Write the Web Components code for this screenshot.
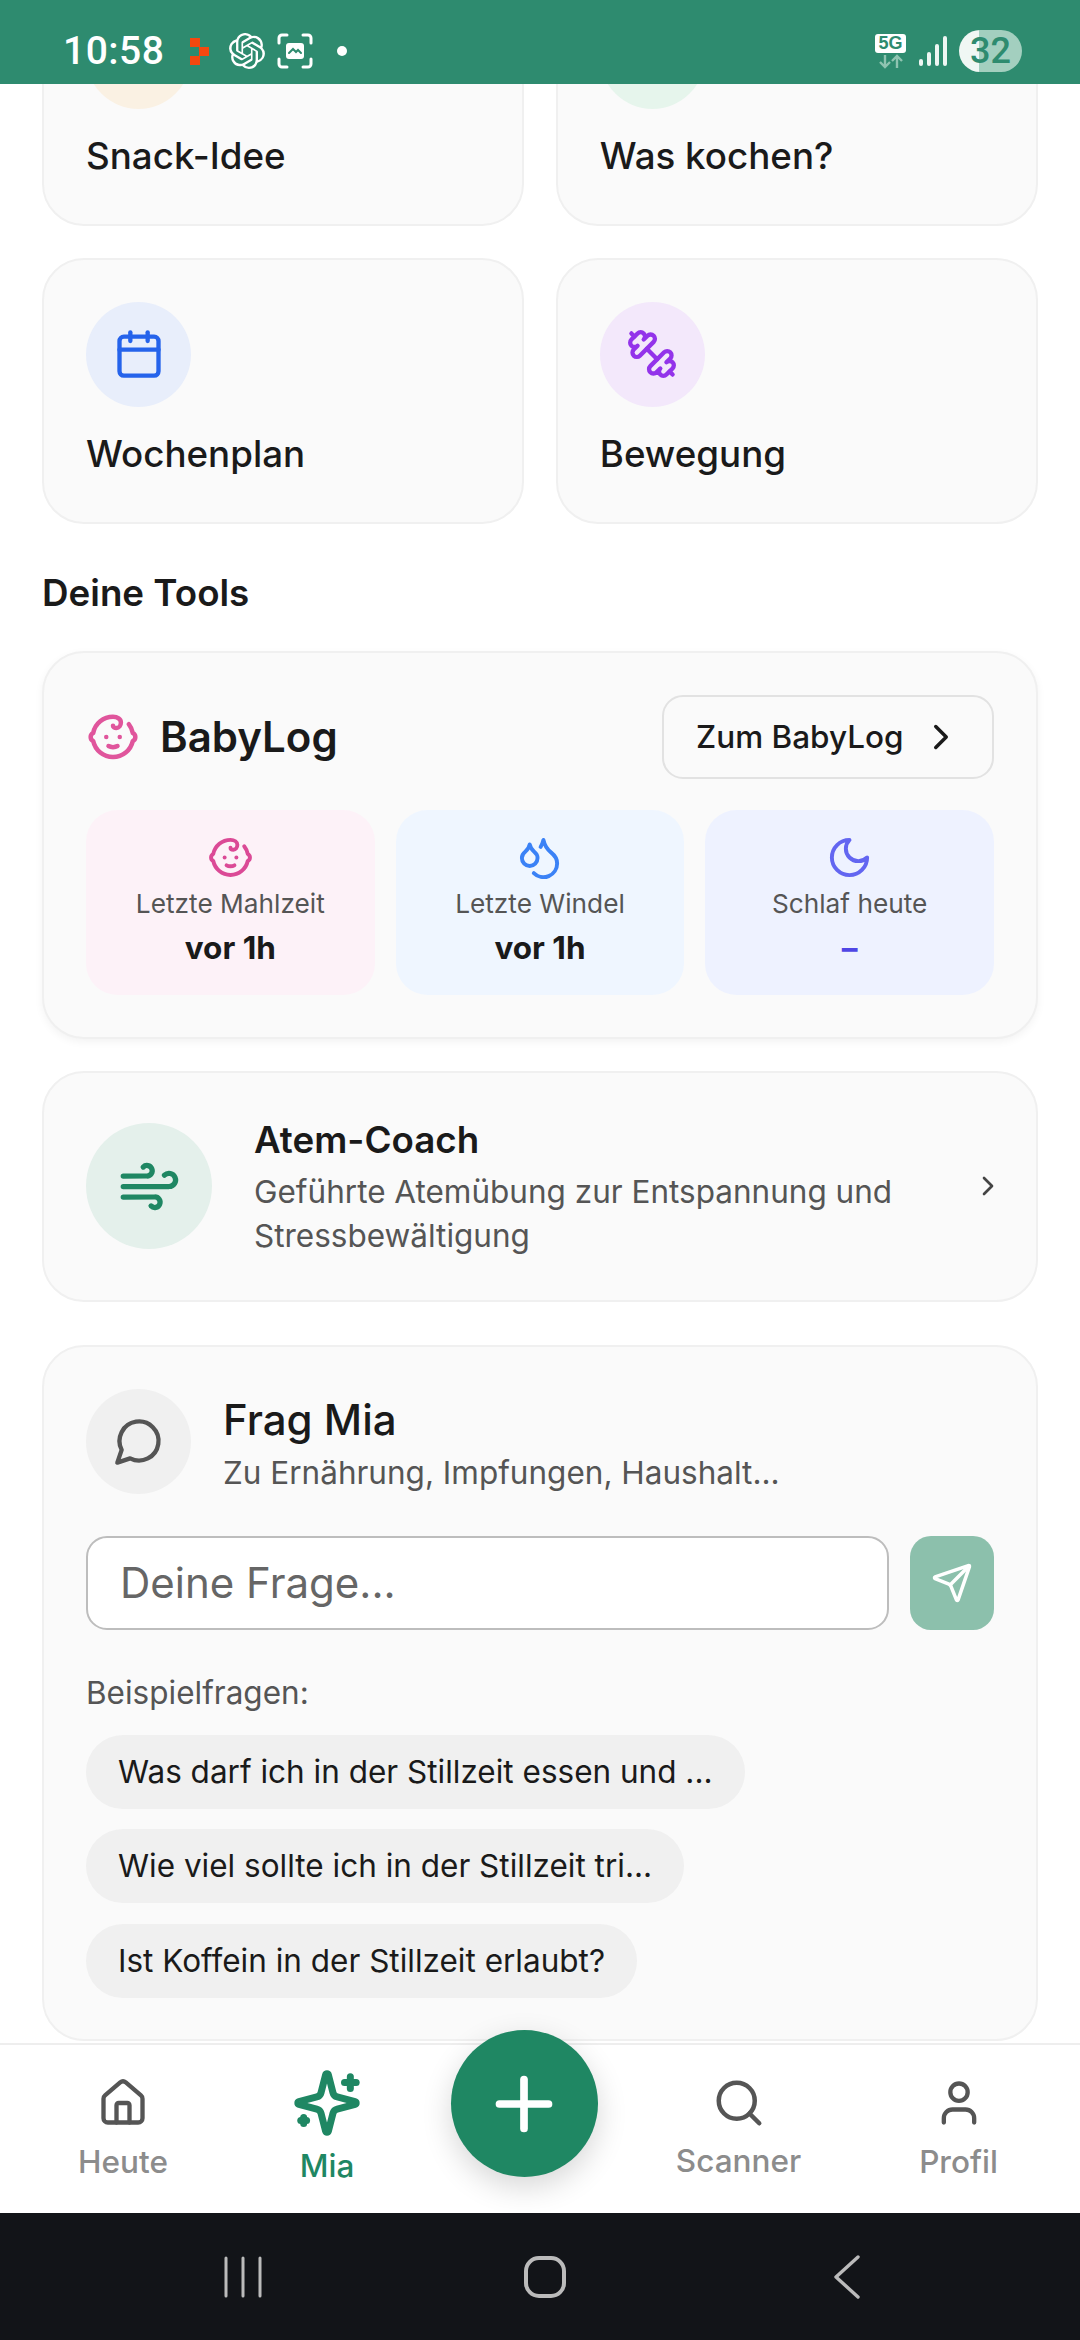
<!DOCTYPE html>
<html lang="de">
<head>
<meta charset="utf-8">
<title>Mia</title>
<style>
  html, body { margin: 0; padding: 0; background: #fff; width: 1080px; height: 2340px; overflow: hidden; }
  body { font-family: Inter, "Liberation Sans", sans-serif; color: #1a1a1a; }
  app-shell { display: flex; }
</style>
</head>
<body>
<app-shell>
  <status-bar slot="top"></status-bar>

  <action-card icon="calendar" tint="#faf1e3" tone="#ea8c1a">Snack-Idee</action-card>
  <action-card icon="calendar" tint="#e6f5ec" tone="#1f8763">Was kochen?</action-card>
  <action-card icon="calendar" tint="#e8eefb" tone="#2563eb">Wochenplan</action-card>
  <action-card icon="dumbbell" tint="#f3e8fb" tone="#9333ea">Bewegung</action-card>

  <section-title slot="after">Deine Tools</section-title>
  <baby-log slot="after">
    <stat-tile icon="baby" bg="#fdf2f8" tone="#db4a96" label="Letzte Mahlzeit" value="vor 1h"></stat-tile>
    <stat-tile icon="droplets" bg="#eff6ff" tone="#3b82f6" label="Letzte Windel" value="vor 1h"></stat-tile>
    <stat-tile icon="moon" bg="#eef2ff" tone="#6366f1" label="Schlaf heute" value="–" value-color="#4f46e5"></stat-tile>
  </baby-log>
  <atem-coach slot="after"></atem-coach>
  <frag-mia slot="after">
    <ask-chip>Was darf ich in der Stillzeit essen und ...</ask-chip>
    <ask-chip>Wie viel sollte ich in der Stillzeit tri...</ask-chip>
    <ask-chip>Ist Koffein in der Stillzeit erlaubt?</ask-chip>
  </frag-mia>

  <bottom-nav slot="nav"></bottom-nav>
  <system-nav slot="nav"></system-nav>
</app-shell>

<script>
'use strict';

const ICONS = {
  calendar: '<path d="M8 2v4"/><path d="M16 2v4"/><rect width="18" height="18" x="3" y="4" rx="2"/><path d="M3 10h18"/>',
  dumbbell: '<path d="M14.4 14.4 9.6 9.6"/><path d="M18.657 21.485a2 2 0 1 1-2.829-2.828l-1.767 1.768a2 2 0 1 1-2.829-2.829l6.364-6.364a2 2 0 1 1 2.829 2.829l-1.768 1.767a2 2 0 1 1 2.828 2.829z"/><path d="m21.5 21.5-1.4-1.4"/><path d="M3.9 3.9 2.5 2.5"/><path d="M6.404 12.768a2 2 0 1 1-2.829-2.829l1.768-1.767a2 2 0 1 1-2.828-2.829l2.828-2.828a2 2 0 1 1 2.829 2.828l1.767-1.768a2 2 0 1 1 2.829 2.829z"/>',
  baby: '<path d="M9 12h.01"/><path d="M15 12h.01"/><path d="M10 16c.5.3 1.2.5 2 .5s1.5-.2 2-.5"/><path d="M19 6.3a9 9 0 0 1 1.8 3.9 2 2 0 0 1 0 3.6 9 9 0 0 1-17.6 0 2 2 0 0 1 0-3.6A9 9 0 0 1 12 3c2 0 3.5 1.1 3.5 2.5s-.9 2.5-2 2.5c-.8 0-1.5-.4-1.5-1"/>',
  droplets: '<path d="M7 16.3c2.2 0 4-1.83 4-4.05 0-1.16-.57-2.26-1.71-3.19S7.29 6.75 7 5.3c-.29 1.45-1.14 2.84-2.29 3.76S3 11.1 3 12.25c0 2.22 1.8 4.05 4 4.05z"/><path d="M12.56 6.6A10.97 10.97 0 0 0 14 3.02c.5 2.5 2 4.9 4 6.5s3 3.5 3 5.5a6.98 6.98 0 0 1-11.91 4.97"/>',
  moon: '<path d="M12 3a6 6 0 0 0 9 9 9 9 0 1 1-9-9Z"/>',
  wind: '<path d="M17.7 7.7a2.5 2.5 0 1 1 1.8 4.3H2"/><path d="M9.6 4.6A2 2 0 1 1 11 8H2"/><path d="M12.6 19.4A2 2 0 1 0 14 16H2"/>',
  message: '<path d="M7.9 20A9 9 0 1 0 4 16.1L2 22Z"/>',
  send: '<path d="M14.536 21.686a.5.5 0 0 0 .937-.024l6.5-19a.496.496 0 0 0-.635-.635l-19 6.5a.5.5 0 0 0-.024.937l7.93 3.18a2 2 0 0 1 1.112 1.11z"/><path d="m21.854 2.147-10.94 10.939"/>',
  house: '<path d="M15 21v-8a1 1 0 0 0-1-1h-4a1 1 0 0 0-1 1v8"/><path d="M3 10a2 2 0 0 1 .709-1.528l7-5.999a2 2 0 0 1 2.582 0l7 5.999A2 2 0 0 1 21 10v9a2 2 0 0 1-2 2H5a2 2 0 0 1-2-2z"/>',
  sparkles: '<path d="M9.937 15.5A2 2 0 0 0 8.5 14.063l-6.135-1.582a.5.5 0 0 1 0-.962L8.5 9.936A2 2 0 0 0 9.937 8.5l1.582-6.135a.5.5 0 0 1 .963 0L14.063 8.5A2 2 0 0 0 15.5 9.937l6.135 1.581a.5.5 0 0 1 0 .964L15.5 14.063a2 2 0 0 0-1.437 1.437l-1.582 6.135a.5.5 0 0 1-.963 0z"/><path d="M20 3v4"/><path d="M22 5h-4"/><path d="M4 17v2"/><path d="M5 18H3"/>',
  search: '<path d="m21 21-4.34-4.34"/><circle cx="11" cy="11" r="8"/>',
  user: '<path d="M19 21v-2a4 4 0 0 0-4-4H9a4 4 0 0 0-4 4v2"/><circle cx="12" cy="7" r="4"/>',
  chevron: '<path d="m9 18 6-6-6-6"/>',
  plus: '<path d="M5 12h14"/><path d="M12 5v14"/>'
};

class LineIcon extends HTMLElement {
  connectedCallback() {
    const size = this.getAttribute('size') || 52;
    const stroke = this.getAttribute('stroke') || 2;
    const tone = this.getAttribute('tone') || 'currentColor';
    this.attachShadow({ mode: 'open' }).innerHTML = `
<style>
  :host { display: block; width: ${size}px; height: ${size}px; flex: none; }
  svg { display: block; width: 100%; height: 100%; }
</style>
<svg viewBox="0 0 24 24" fill="none" stroke="${tone}" stroke-width="${stroke}" stroke-linecap="round" stroke-linejoin="round">${ICONS[this.getAttribute('name')]}</svg>`;
  }
}
customElements.define('line-icon', LineIcon);

class AppShell extends HTMLElement {
  constructor() {
    super();
    this.attachShadow({ mode: 'open' }).innerHTML = `
<style>
  :host { display: flex; flex-direction: column; width: 1080px; height: 2340px; overflow: hidden; }
  main { flex: 1; min-height: 0; overflow: hidden; }
  .scroll { margin-top: -124px; padding: 0 42px; display: flex; flex-direction: column; }
  .grid { display: grid; grid-template-columns: 1fr 1fr; gap: 31.5px; }
  .after { display: flex; flex-direction: column; }
  .nav { position: relative; z-index: 2; }
</style>
<slot name="top"></slot>
<main>
  <div class="scroll">
    <div class="grid"><slot></slot></div>
    <div class="after"><slot name="after"></slot></div>
  </div>
</main>
<div class="nav"><slot name="nav"></slot></div>`;
  }
}
customElements.define('app-shell', AppShell);

class StatusBar extends HTMLElement {
  constructor() {
    super();
    this.attachShadow({ mode: 'open' }).innerHTML = `
<style>
  :host { display: flex; align-items: center; justify-content: space-between; height: 84px; background: #2e8b6f; color: #fff; padding: 18px 58px 0 63px; box-sizing: border-box; position: relative; z-index: 2; font-family: Roboto, "Noto Sans", sans-serif; }
  .left, .right { display: flex; align-items: center; }
  .time { font-size: 39px; font-weight: 500; letter-spacing: .5px; margin-right: 26px; }
  .dot { width: 10px; height: 10px; border-radius: 50%; background: #fff; margin-left: 24px; }
  svg { display: block; flex: none; }
  .g5 { display: flex; flex-direction: column; align-items: center; gap: 1px; margin: 0 13px 0 0; }
  .g5 b { display: block; background: #fff; color: #2e8b6f; font-size: 18px; line-height: 19px; width: 31px; text-align: center; border-radius: 3px; font-family: "Liberation Sans", sans-serif; }
  .batt { width: 63px; height: 42px; margin-left: 12px; border-radius: 21px; overflow: hidden; background: linear-gradient(90deg, #f0f7f4 0 32%, #a3cfbf 32% 100%); color: #2e8b6f; font-size: 36px; font-weight: 500; line-height: 42px; text-align: center; }
</style>
<div class="left">
  <span class="time">10:58</span>
  <svg width="20" height="27" viewBox="0 0 20 27" fill="#f4480f"><rect x="0" y="0" width="10" height="9"/><rect x="9" y="9" width="10" height="9"/><rect x="0" y="18" width="10" height="9"/></svg>
  <svg style="margin-left:19px" width="36" height="36" viewBox="0 0 24 24" fill="#fff"><path d="M22.2819 9.8211a5.9847 5.9847 0 0 0-.5157-4.9108 6.0462 6.0462 0 0 0-6.5098-2.9A6.0651 6.0651 0 0 0 4.9807 4.1818a5.9847 5.9847 0 0 0-3.9977 2.9 6.0462 6.0462 0 0 0 .7427 7.0966 5.98 5.98 0 0 0 .511 4.9107 6.051 6.051 0 0 0 6.5146 2.9001A5.9847 5.9847 0 0 0 13.2599 24a6.0557 6.0557 0 0 0 5.7718-4.2058 5.9894 5.9894 0 0 0 3.9977-2.9001 6.0557 6.0557 0 0 0-.7475-7.0729zm-9.022 12.6081a4.4755 4.4755 0 0 1-2.8764-1.0408l.1419-.0804 4.7783-2.7582a.7948.7948 0 0 0 .3927-.6813v-6.7369l2.02 1.1686a.071.071 0 0 1 .038.052v5.5826a4.504 4.504 0 0 1-4.4945 4.4944zm-9.6607-4.1254a4.4708 4.4708 0 0 1-.5346-3.0137l.142.0852 4.783 2.7582a.7712.7712 0 0 0 .7806 0l5.8428-3.3685v2.3324a.0804.0804 0 0 1-.0332.0615L9.74 19.9502a4.4992 4.4992 0 0 1-6.1408-1.6464zM2.3408 7.8956a4.485 4.485 0 0 1 2.3655-1.9728V11.6a.7664.7664 0 0 0 .3879.6765l5.8144 3.3543-2.0201 1.1685a.0757.0757 0 0 1-.071 0l-4.8303-2.7865A4.504 4.504 0 0 1 2.3408 7.872zm16.5963 3.8558L13.1038 8.364 15.1192 7.2a.0757.0757 0 0 1 .071 0l4.8303 2.7913a4.4944 4.4944 0 0 1-.6765 8.1042v-5.6772a.79.79 0 0 0-.407-.667zm2.0107-3.0231l-.142-.0852-4.7735-2.7818a.7759.7759 0 0 0-.7854 0L9.409 9.2297V6.8974a.0662.0662 0 0 1 .0284-.0615l4.8303-2.7866a4.4992 4.4992 0 0 1 6.6802 4.66zM8.3065 12.863l-2.02-1.1638a.0804.0804 0 0 1-.038-.0567V6.0742a4.4992 4.4992 0 0 1 7.3757-3.4537l-.142.0805L8.704 5.459a.7948.7948 0 0 0-.3927.6813zm1.0976-2.3654l2.602-1.4998 2.6069 1.4998v2.9994l-2.5974 1.4997-2.6067-1.4997Z"/></svg>
  <svg style="margin-left:12px" width="36" height="36" viewBox="0 0 36 36" fill="none" stroke="#fff" stroke-width="3" stroke-linecap="round"><path d="M2 10V5a3 3 0 0 1 3-3h5M26 2h5a3 3 0 0 1 3 3v5M34 26v5a3 3 0 0 1-3 3h-5M10 34H5a3 3 0 0 1-3-3v-5"/><rect x="9" y="10" width="18" height="16" rx="3" fill="#fff" stroke="none"/><path d="M12 20l4-4 3 3 2-2 3 3" stroke="#2e8b6f" stroke-width="2"/></svg>
  <span class="dot"></span>
</div>
<div class="right">
  <div class="g5">
    <b>5G</b>
    <svg width="30" height="15" viewBox="0 0 30 15" fill="none" stroke="#8fc4b1" stroke-width="2.4"><path d="M9 1v12M4 8l5 5 5-5M21 14V2M16 7l5-5 5 5"/></svg>
  </div>
  <svg width="28" height="30" viewBox="0 0 28 30" fill="#eef6f3"><rect x="0" y="23" width="4" height="7" rx="2"/><rect x="8" y="16" width="4" height="14" rx="2"/><rect x="16" y="8" width="4" height="22" rx="2"/><rect x="24" y="0" width="4" height="30" rx="2"/></svg>
  <div class="batt">32</div>
</div>`;
  }
}
customElements.define('status-bar', StatusBar);

class ActionCard extends HTMLElement {
  connectedCallback() {
    this.attachShadow({ mode: 'open' }).innerHTML = `
<style>
  :host { display: block; box-sizing: border-box; height: 266px; padding: 42px; background: #fafafa; border: 2px solid #f0f0f0; border-radius: 42px; }
  .circle { width: 105px; height: 105px; border-radius: 50%; background: ${this.getAttribute('tint')}; display: flex; align-items: center; justify-content: center; }
  .label { margin-top: 21px; font-size: 36.75px; line-height: 52.5px; font-weight: 450; color: #1a1a1a; }
</style>
<div class="circle"><line-icon name="${this.getAttribute('icon')}" size="52" tone="${this.getAttribute('tone')}"></line-icon></div>
<div class="label"><slot></slot></div>`;
  }
}
customElements.define('action-card', ActionCard);

class SectionTitle extends HTMLElement {
  constructor() {
    super();
    this.attachShadow({ mode: 'open' }).innerHTML = `
<style>
  :host { display: block; margin: 43px 0 31.5px; font-size: 36.75px; line-height: 52.5px; font-weight: 600; color: #1a1a1a; }
</style>
<slot></slot>`;
  }
}
customElements.define('section-title', SectionTitle);

class BabyLog extends HTMLElement {
  constructor() {
    super();
    this.attachShadow({ mode: 'open' }).innerHTML = `
<style>
  :host { display: block; box-sizing: border-box; height: 388px; padding: 42px; background: #fafafa; border: 2px solid #f0f0f0; border-radius: 42px; box-shadow: 0 3px 8px rgba(0,0,0,.05); }
  .head { display: flex; align-items: center; justify-content: space-between; height: 84px; }
  .brand { display: flex; align-items: center; gap: 20px; font-size: 42px; line-height: 50px; font-weight: 600; color: #1a1a1a; }
  .btn { box-sizing: border-box; height: 84px; width: 332px; display: flex; align-items: center; justify-content: space-between; padding: 0 30px 0 32px; background: #fafafa; border: 2px solid #e2e2e2; border-radius: 21px; font-size: 31.5px; font-weight: 450; color: #1a1a1a; }
  .tiles { margin-top: 31px; display: grid; grid-template-columns: repeat(3, 1fr); gap: 21px; }
</style>
<div class="head">
  <div class="brand"><line-icon name="baby" size="54" tone="#e0559c"></line-icon><span>BabyLog</span></div>
  <div class="btn"><span>Zum BabyLog</span><line-icon name="chevron" size="42" tone="#1a1a1a"></line-icon></div>
</div>
<div class="tiles"><slot></slot></div>`;
  }
}
customElements.define('baby-log', BabyLog);

class StatTile extends HTMLElement {
  connectedCallback() {
    const color = this.getAttribute('value-color') || '#1a1a1a';
    this.attachShadow({ mode: 'open' }).innerHTML = `
<style>
  :host { display: flex; flex-direction: column; align-items: center; box-sizing: border-box; height: 185px; padding-top: 24px; background: ${this.getAttribute('bg')}; border-radius: 31.5px; }
  .label { margin-top: 2px; font-size: 26.25px; line-height: 42px; color: #555; }
  .value { margin-top: 2px; font-size: 31.5px; line-height: 42px; font-weight: 700; color: ${color}; }
</style>
<line-icon name="${this.getAttribute('icon')}" size="47" tone="${this.getAttribute('tone')}"></line-icon>
<div class="label">${this.getAttribute('label')}</div>
<div class="value">${this.getAttribute('value')}</div>`;
  }
}
customElements.define('stat-tile', StatTile);

class AtemCoach extends HTMLElement {
  constructor() {
    super();
    this.attachShadow({ mode: 'open' }).innerHTML = `
<style>
  :host { display: flex; align-items: center; box-sizing: border-box; height: 231px; margin-top: 32px; padding: 0 32px 0 42px; background: #fafafa; border: 2px solid #f0f0f0; border-radius: 42px; }
  .circle { width: 126px; height: 126px; border-radius: 50%; background: #e4f0eb; display: flex; align-items: center; justify-content: center; flex: none; }
  .text { flex: 1; margin-left: 42px; }
  .title { font-size: 36.75px; line-height: 52.5px; font-weight: 600; color: #1a1a1a; }
  .sub { margin-top: 4px; font-size: 31.5px; line-height: 44px; color: #555; }
</style>
<div class="circle"><line-icon name="wind" size="63" tone="#1f8763"></line-icon></div>
<div class="text">
  <div class="title">Atem-Coach</div>
  <div class="sub">Geführte Atemübung zur Entspannung und Stressbewältigung</div>
</div>
<line-icon name="chevron" size="32" tone="#444"></line-icon>`;
  }
}
customElements.define('atem-coach', AtemCoach);

class FragMia extends HTMLElement {
  constructor() {
    super();
    this.attachShadow({ mode: 'open' }).innerHTML = `
<style>
  :host { display: block; box-sizing: border-box; height: 696px; margin-top: 43px; padding: 42px; background: #fafafa; border: 2px solid #f0f0f0; border-radius: 42px; }
  .head { display: flex; align-items: center; gap: 32px; }
  .circle { width: 105px; height: 105px; border-radius: 50%; background: #f0f0f0; display: flex; align-items: center; justify-content: center; flex: none; }
  .copy { padding-top: 5px; }
  .title { font-size: 42px; line-height: 52px; font-weight: 450; color: #1a1a1a; }
  .sub { font-size: 31.5px; line-height: 42px; margin-top: 6px; color: #555; }
  .ask { margin-top: 42px; display: flex; gap: 21px; }
  .input { flex: 1; box-sizing: border-box; height: 94px; display: flex; align-items: center; padding: 0 32px; background: #fff; border: 2px solid #bdbdbd; border-radius: 21px; font-size: 42px; color: #666; }
  .send { width: 84px; height: 94px; background: #8cc0ac; border-radius: 21px; display: flex; align-items: center; justify-content: center; flex: none; }
  .hint { margin-top: 42px; font-size: 31.5px; line-height: 42px; color: #555; }
  .chips { margin-top: 21px; display: flex; flex-direction: column; align-items: flex-start; gap: 20.5px; }
</style>
<div class="head">
  <div class="circle"><line-icon name="message" size="52" tone="#555"></line-icon></div>
  <div class="copy">
    <div class="title">Frag Mia</div>
    <div class="sub">Zu Ernährung, Impfungen, Haushalt...</div>
  </div>
</div>
<div class="ask">
  <div class="input">Deine Frage...</div>
  <div class="send"><line-icon name="send" size="42" tone="#fff"></line-icon></div>
</div>
<div class="hint">Beispielfragen:</div>
<div class="chips"><slot></slot></div>`;
  }
}
customElements.define('frag-mia', FragMia);

class AskChip extends HTMLElement {
  constructor() {
    super();
    this.attachShadow({ mode: 'open' }).innerHTML = `
<style>
  :host { display: block; box-sizing: border-box; height: 74px; padding: 0 32px; background: #f0f0f0; border-radius: 37px; font-size: 31.5px; line-height: 74px; color: #1a1a1a; white-space: nowrap; }
</style>
<slot></slot>`;
  }
}
customElements.define('ask-chip', AskChip);

class BottomNav extends HTMLElement {
  constructor() {
    super();
    this.attachShadow({ mode: 'open' }).innerHTML = `
<style>
  :host { display: grid; grid-template-columns: 246px 162px 232px 197px 243px; box-sizing: border-box; height: 170px; background: #fff; border-top: 2px solid #eee; }
  .fab-cell { display: flex; justify-content: center; align-items: flex-start; }
  .fab { width: 147px; height: 147px; margin-top: -15px; border-radius: 50%; background: #1f8763; box-shadow: 0 10px 30px rgba(0,0,0,.16); display: flex; align-items: center; justify-content: center; position: relative; }
</style>
<nav-item icon="house" size="52" label="Heute"></nav-item>
<nav-item icon="sparkles" size="70" label="Mia" active></nav-item>
<div class="fab-cell"><div class="fab"><line-icon name="plus" size="84" stroke="2.2" tone="#fff"></line-icon></div></div>
<nav-item icon="search" size="54" label="Scanner"></nav-item>
<nav-item icon="user" size="52" label="Profil"></nav-item>`;
  }
}
customElements.define('bottom-nav', BottomNav);

class NavItem extends HTMLElement {
  connectedCallback() {
    const active = this.hasAttribute('active');
    const size = +this.getAttribute('size');
    this.attachShadow({ mode: 'open' }).innerHTML = `
<style>
  :host { display: flex; flex-direction: column; align-items: center; height: 168px; box-sizing: border-box; padding-top: ${58 - size / 2}px; color: ${active ? '#1f8763' : '#8c8c8c'}; font-size: 31.5px; line-height: 42px; font-weight: 450; }
  .label { margin-top: ${active ? 7 : 12 + (52 - size)}px; }
</style>
<line-icon name="${this.getAttribute('icon')}" size="${size}" stroke="${active ? 2.4 : 2}" tone="${active ? '#1f8763' : '#555'}"></line-icon>
<div class="label">${this.getAttribute('label')}</div>`;
  }
}
customElements.define('nav-item', NavItem);

class SystemNav extends HTMLElement {
  constructor() {
    super();
    this.attachShadow({ mode: 'open' }).innerHTML = `
<style>
  :host { display: flex; align-items: center; box-sizing: border-box; height: 127px; background: #121418; padding: 0 82px 0 92px; }
  .slot { flex: 1; display: flex; justify-content: center; }
  svg { display: block; }
</style>
<div class="slot"><svg width="40" height="42" viewBox="0 0 40 42" stroke="#bbb" stroke-width="3" stroke-linecap="round"><path d="M3 2v38M20 2v38M37 2v38"/></svg></div>
<div class="slot"><svg width="42" height="42" viewBox="0 0 42 42" fill="none" stroke="#bbb" stroke-width="4"><rect x="2" y="2" width="38" height="38" rx="13"/></svg></div>
<div class="slot"><svg width="28" height="44" viewBox="0 0 28 44" fill="none" stroke="#bbb" stroke-width="3.4" stroke-linecap="round" stroke-linejoin="round"><path d="M25 2 3 22l22 20"/></svg></div>`;
  }
}
customElements.define('system-nav', SystemNav);
</script>
</body>
</html>
